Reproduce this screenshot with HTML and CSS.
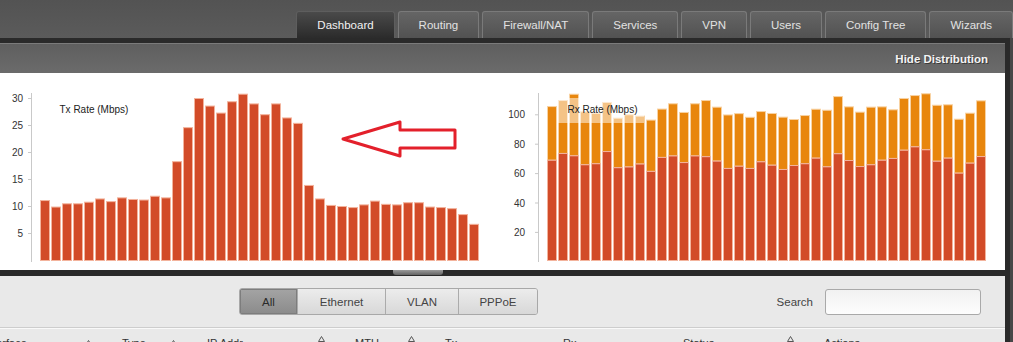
FILE: index.html
```html
<!DOCTYPE html>
<html lang="en">
<head>
  <meta charset="UTF-8">
  <meta name="viewport" content="width=device-width, initial-scale=1.0">
  <link rel="stylesheet" href="styles.css">
</head>
<body>

<!-- main navigation -->
<div class="topnav">
  <ul class="tabs">
    <li class="tab active">Dashboard</li>
    <li class="tab">Routing</li>
    <li class="tab">Firewall/NAT</li>
    <li class="tab">Services</li>
    <li class="tab">VPN</li>
    <li class="tab">Users</li>
    <li class="tab">Config Tree</li>
    <li class="tab">Wizards</li>
  </ul>
</div>

<div class="panel">
  <div class="panel-head"><span class="toggle">Hide Distribution</span></div>

  <!-- distribution charts -->
  <div class="charts">
    <svg class="chart" id="tx-chart" width="500" height="197"></svg>
    <svg class="chart" id="rx-chart" width="505" height="197"></svg>
  </div>

  <div class="divider"><span class="grip"></span></div>

  <div class="toolbar">
    <div class="filters">
      <button class="filter active">All</button>
      <button class="filter">Ethernet</button>
      <button class="filter">VLAN</button>
      <button class="filter">PPPoE</button>
    </div>
    <label class="search">Search <input type="text"></label>
  </div>

  <div class="table-head">
    <div class="col col-iface"><span>Interface</span><svg class="sort low" width="7" height="6"><path d="M0.5 5.5 L3.5 0.5 L6.5 5.5 Z"/></svg></div>
    <div class="col col-type"><span>Type</span><svg class="sort low" width="7" height="6"><path d="M0.5 5.5 L3.5 0.5 L6.5 5.5 Z"/></svg></div>
    <div class="col col-ip"><span>IP Addr</span><svg class="sort" width="7" height="6"><path d="M0.5 5.5 L3.5 0.5 L6.5 5.5 Z"/></svg></div>
    <div class="col col-mtu"><span>MTU</span><svg class="sort" width="7" height="6"><path d="M0.5 5.5 L3.5 0.5 L6.5 5.5 Z"/></svg></div>
    <div class="col col-tx"><span>Tx</span></div>
    <div class="col col-rx"><span>Rx</span></div>
    <div class="col col-status"><span>Status</span><svg class="sort" width="7" height="6"><path d="M0.5 5.5 L3.5 0.5 L6.5 5.5 Z"/></svg></div>
    <div class="col col-actions"><span>Actions</span></div>
  </div>
</div>

<script>
  const NS = 'http://www.w3.org/2000/svg';

  const tx = [11.1, 9.9, 10.5, 10.5, 10.8, 11.4, 10.9, 11.6, 11.3, 11.2, 11.9, 11.6, 18.3, 24.6,
    30.0, 28.6, 27.3, 29.4, 30.8, 29.0, 27.0, 29.0, 26.4, 25.4, 13.9, 11.4, 10.2, 10.0, 9.8, 10.3,
    11.0, 10.4, 10.3, 10.7, 10.7, 9.9, 9.8, 9.6, 8.5, 6.7];

  const rxTotal = [105.6, 109.7, 114, 102, 101, 108.4, 97.7, 100, 99.1, 96.4, 103.9, 107.5, 101.6,
    107.5, 109.7, 105.2, 99.9, 100.8, 98.3, 102.2, 100.9, 98.4, 96.8, 99.5, 103.8, 103.1, 112.4,
    105.4, 101.8, 105.2, 105.4, 103.4, 111.1, 113.1, 114.3, 106.5, 106.8, 97, 101.1, 109.5];
  const rxLow = [69.1, 73.7, 72.1, 66, 66.7, 75, 64, 64.5, 66.5, 61.5, 71, 72, 67.5, 72, 71.5, 68.5,
    63.5, 65, 63.5, 68, 65.7, 62.8, 65.5, 66.7, 70.5, 64.6, 73.5, 68.9, 64.8, 66, 69.1, 70.3, 75.9,
    78.2, 76.2, 68.4, 70.5, 60.3, 67.1, 71.6];

  function add(parent, name, attrs, text) {
    const node = document.createElementNS(NS, name);
    for (const k in attrs) node.setAttribute(k, attrs[k]);
    if (text) node.textContent = text;
    parent.appendChild(node);
    return node;
  }

  function axis(svg, x, ticks, toY, labelX) {
    add(svg, 'line', { x1: x + 0.5, y1: 20, x2: x + 0.5, y2: 189, class: 'axis' });
    ticks.forEach(v => {
      const y = toY(v);
      add(svg, 'line', { x1: x - 3, y1: y + 0.5, x2: x, y2: y + 0.5, class: 'axis' });
      add(svg, 'text', { x: labelX, y: y + 4, class: 'tick' }, String(v));
    });
  }

  function title(svg, x, label) {
    add(svg, 'rect', { x: x, y: 25, width: 86, height: 25, class: 'title-box' });
    add(svg, 'text', { x: x + 9.5, y: 40, class: 'title' }, label);
  }

  // Tx chart
  const txSvg = document.getElementById('tx-chart');
  const txY = v => 187 - v * 5.4;
  axis(txSvg, 31, [5, 10, 15, 20, 25, 30], txY, 23);
  tx.forEach((v, i) => {
    const top = txY(v);
    add(txSvg, 'rect', { x: 40.5 + i * 11, y: top + 0.5, width: 9, height: 187 - top, class: 'bar low' });
  });
  title(txSvg, 50, 'Tx Rate (Mbps)');
  add(txSvg, 'polygon', { points: '343,66 400,49 400,57 455,57 455,75 400,75 400,83', class: 'arrow' });

  // Rx chart
  const rxSvg = document.getElementById('rx-chart');
  const rxY = v => 188.3 - v * 1.47;
  axis(rxSvg, 38, [20, 40, 60, 80, 100], rxY, 25);
  rxTotal.forEach((v, i) => {
    const top = rxY(v);
    const mid = rxY(rxLow[i]);
    const x = 47.5 + i * 11;
    add(rxSvg, 'rect', { x: x, y: top + 0.5, width: 9, height: mid - top, class: 'bar high' });
    add(rxSvg, 'rect', { x: x, y: mid + 0.5, width: 9, height: 187 - mid, class: 'bar low' });
  });
  title(rxSvg, 58, 'Rx Rate (Mbps)');
</script>

</body>
</html>
```

FILE: styles.css
```css
* { box-sizing: border-box; }

html, body {
  margin: 0;
  height: 100%;
}

body {
  background: #474747;
  font-family: "Liberation Sans", Arial, sans-serif;
  overflow: hidden;
}

.topnav {
  height: 38px;
  padding: 11px 0 0 0;
  background: linear-gradient(#535353, #5b5b5b);
}

.tabs {
  display: flex;
  justify-content: flex-end;
  gap: 3px;
  height: 27px;
  margin: 0;
  padding: 0;
  list-style: none;
}

.tab {
  height: 27px;
  padding: 0 20px;
  line-height: 26px;
  font-size: 11.5px;
  color: #e2e2e2;
  background: linear-gradient(#656565, #525252);
  border: 1px solid #7a7a7a;
  border-bottom: none;
  border-radius: 3px 3px 0 0;
}

.tab.active {
  color: #f2f2f2;
  background: linear-gradient(#4a4a4a, #2b2b2b);
  border-color: #5e5e5e;
}

.panel {
  height: 304px;
  margin-right: 3px;
  overflow: hidden;
  background: #e9e9e9;
  border-top: 5px solid #2a2a2a;
  border-right: 5px solid #2a2a2a;
}

.panel-head {
  height: 30px;
  display: flex;
  justify-content: flex-end;
  align-items: center;
  padding-right: 17px;
  background: linear-gradient(#5f5f5f, #6b6b6b);
  border-top: 1px solid #7b7b7b;
}

.toggle {
  font-size: 11.5px;
  font-weight: bold;
  color: #f4f4f4;
  text-shadow: 1px 1px 0 #3a3a3a;
}

/* charts */
.charts {
  display: flex;
  height: 197px;
  background: #fff;
}

.chart { display: block; }

.chart .axis {
  stroke: #c9c9c9;
  stroke-width: 1;
}

.chart .tick {
  font-family: "Liberation Sans", Arial, sans-serif;
  font-size: 10px;
  fill: #333;
  text-anchor: end;
}

.chart .title {
  font-family: "Liberation Sans", Arial, sans-serif;
  font-size: 10px;
  fill: #222;
}

.chart .title-box { fill: rgba(255,255,255,0.5); }

.chart .bar { stroke-width: 1; }
.chart .bar.low { fill: #d24b28; stroke: #f3b39c; }
.chart .bar.high { fill: #e8860d; stroke: #f8d2a2; }

.chart .arrow {
  fill: none;
  stroke: #e3202b;
  stroke-width: 3;
  stroke-linejoin: round;
}

.divider {
  height: 6px;
  padding-left: 393px;
  background: #2a2a2a;
}

.grip {
  display: block;
  width: 50px;
  height: 5px;
  background: linear-gradient(#9a9a9a, #636363);
  border-radius: 0 0 3px 3px;
}

/* filter bar */
.toolbar {
  height: 52px;
  display: flex;
  align-items: center;
  justify-content: space-between;
  padding: 0 24px 0 239px;
  border-bottom: 1px solid #cdcdcd;
  box-shadow: 0 1px 0 #f9f9f9;
}

.filters {
  display: grid;
  grid-template-columns: 57px 88px 73px 79px;
  height: 27px;
  border: 1px solid #a8a8a8;
  border-radius: 3px;
  overflow: hidden;
}

.filter {
  height: 25px;
  padding: 0;
  margin: 0;
  font-family: inherit;
  font-size: 11.5px;
  color: #444;
  background: linear-gradient(#ececec, #d8d8d8);
  border: none;
  border-left: 1px solid #ababab;
}

.filter:first-child { border-left: none; }

.filter.active {
  color: #2a2a2a;
  background: linear-gradient(#a4a4a4, #8b8b8b);
  box-shadow: inset 0 0 0 1px #7d7d7d;
}

.search {
  display: flex;
  align-items: center;
  gap: 12px;
  font-size: 11.5px;
  color: #444;
}

.search input {
  width: 156px;
  height: 26px;
  margin: 0;
  background: linear-gradient(#f1f1f1, #fdfdfd);
  border: 1px solid #a9a9a9;
  border-radius: 3px;
}

/* table header */
.table-head {
  display: flex;
  margin-left: -16px;
  padding-top: 8px;
  font-size: 11px;
  line-height: 14px;
  color: #333;
}

.col {
  flex-shrink: 0;
  display: flex;
  justify-content: space-between;
  align-items: flex-start;
  padding-right: 30px;
}

.col-iface { width: 138px; }
.col-type { width: 85px; }
.col-ip { width: 148px; }
.col-mtu { width: 90px; }
.col-tx { width: 118px; }
.col-rx { width: 120px; }
.col-status { width: 141px; }

.sort {
  display: block;
  margin-top: 0;
  fill: none;
  stroke: #555;
  stroke-width: 1;
}

.sort.low { margin-top: 4px; }
```
